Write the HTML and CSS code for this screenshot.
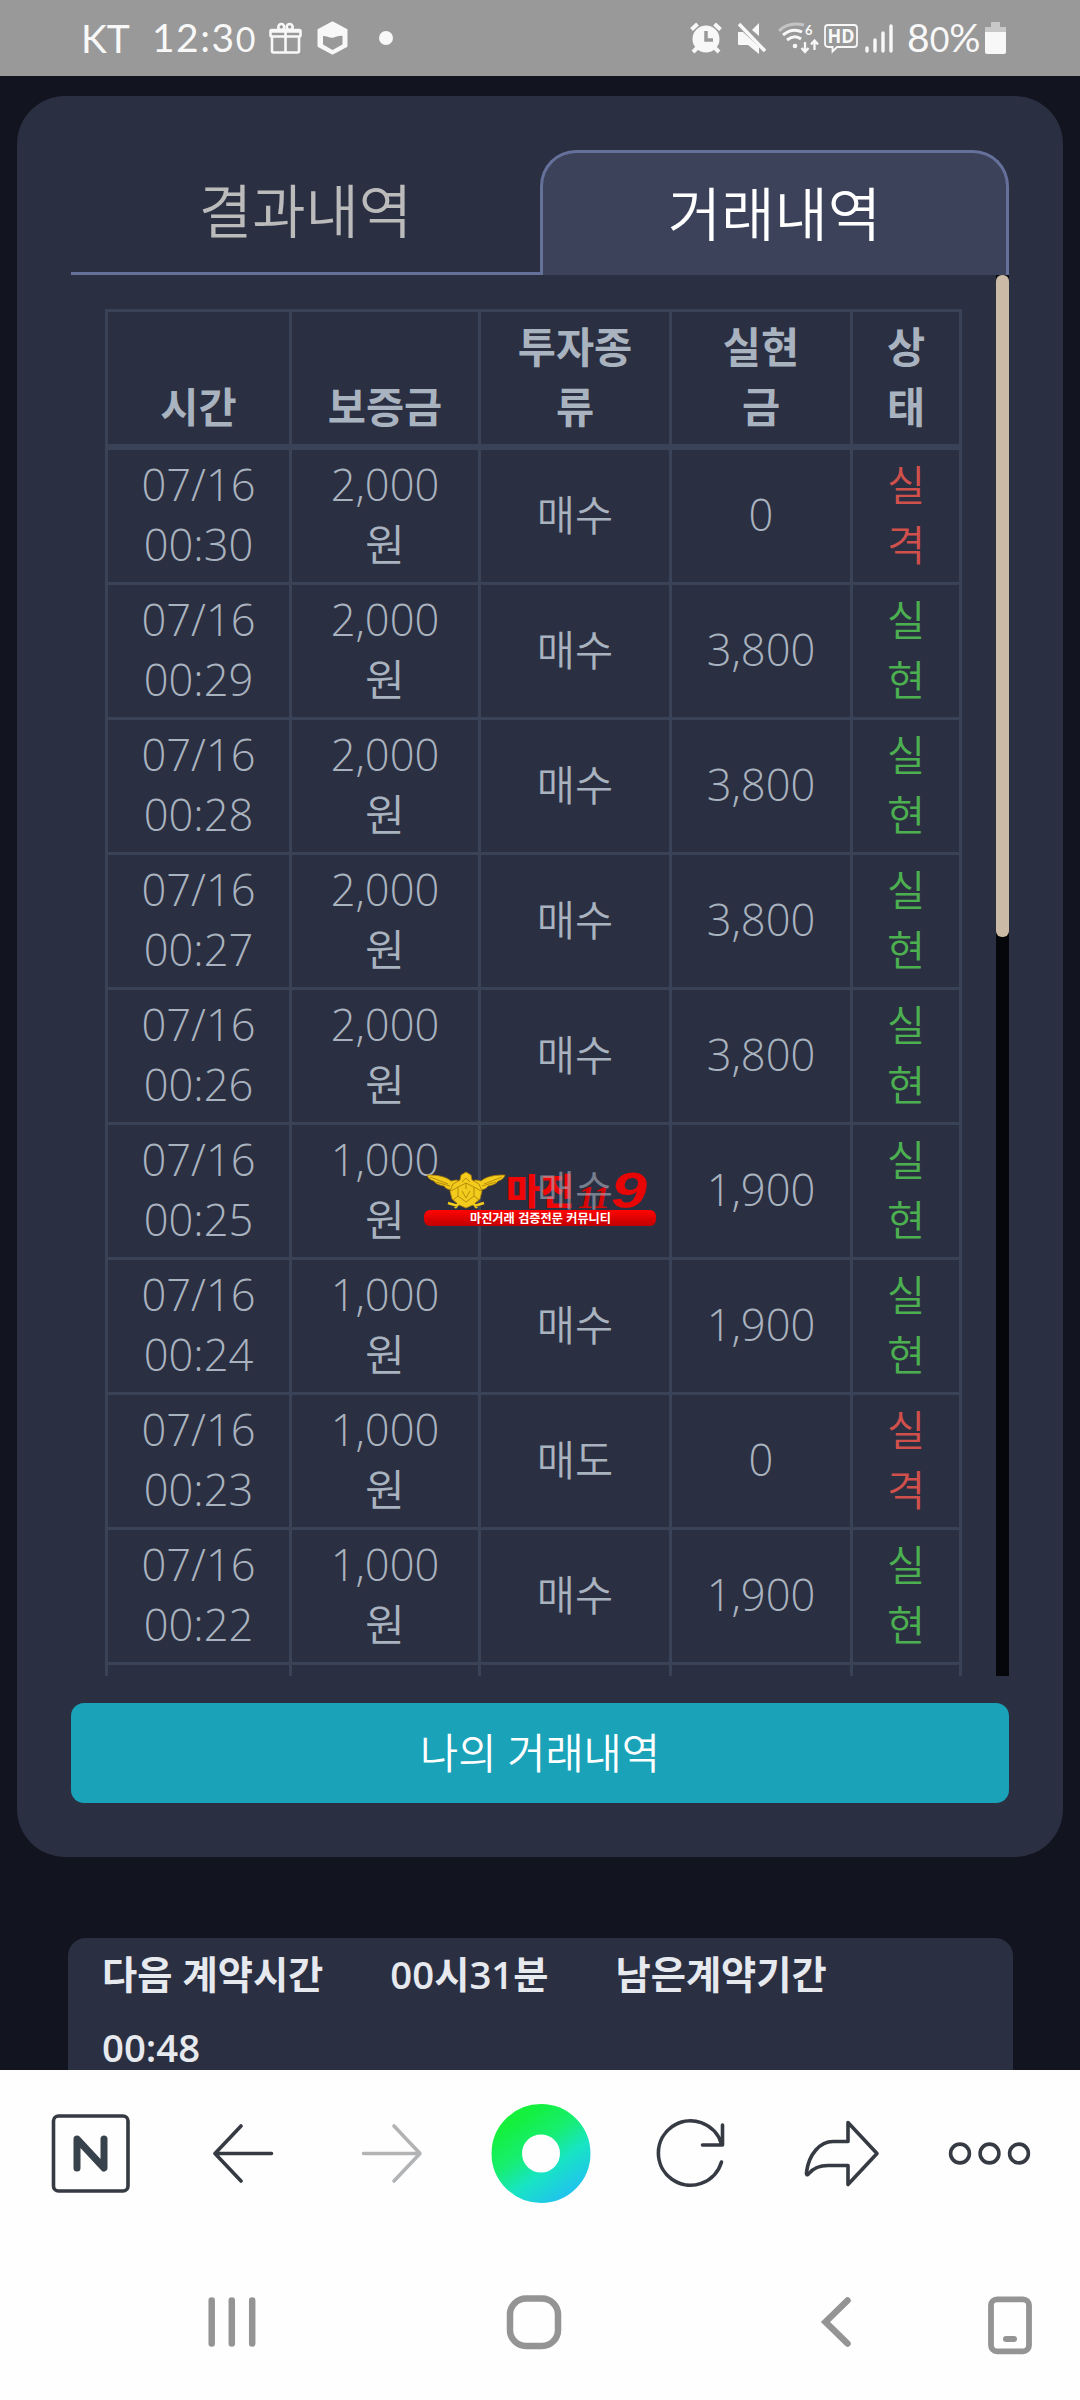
FILE: index.html
```html
<!DOCTYPE html>
<html lang="ko">
<head>
    <meta charset="UTF-8">
    <meta name="viewport" content="width=device-width, initial-scale=1.0">
    <title>거래내역</title>
    <link rel="stylesheet" href="styles.css">
</head>
<body>
    <div class="status-bar">
        <span class="carrier">KT</span>
        <span class="clock">12:3<span class="small-zero">0</span></span>
        <svg class="gift" width="33" height="32" viewBox="0 0 33 32" fill="none" stroke="#f8f8f8" stroke-width="2.6">
            <rect x="1.5" y="8" width="30" height="6.500" rx="1"/>
            <path d="M3 14.500V29a1.500 1.500 0 0 0 1.500 1.500h24A1.500 1.500 0 0 0 30 29V14.500M16.500 8v22M2 9.500h29"/>
            <circle cx="12.300" cy="5" r="3"/>
            <circle cx="20.700" cy="5" r="3"/>
        </svg>
        <svg class="hex" width="31" height="34" viewBox="0 0 31 34">
            <path d="M15.500 1.500L29.500 9v16L15.500 32.500 1.500 25V9z" fill="#f8f8f8" stroke="#f8f8f8" stroke-width="2" stroke-linejoin="round"/>
            <path d="M6 15c4 0 7 2.500 11 1.500 3-1 6-2 8.500-1.500v8.500l-10 5.500L6 23.500z" fill="#999"/>
        </svg>
        <span class="dot"></span>

        <div class="status-right">
            <svg width="32" height="32" viewBox="0 0 32 32" fill="#f8f8f8" stroke="#f8f8f8">
                <circle cx="16" cy="17" r="13.500" stroke="none"/>
                <path d="M1.500 7.500l6-5.500M30.500 7.500l-6-5.500" stroke-width="4"/>
                <path d="M7 26l-4 4M25 26l4 4" stroke-width="4"/>
                <path d="M16 9v9h7" fill="none" stroke="#999" stroke-width="3.500"/>
            </svg>
            <svg class="mute" width="30" height="32" viewBox="0 0 30 32" fill="#f8f8f8">
                <path d="M1 10h5l16 15v7l-11-9H2a1 1 0 0 1-1-1z"/>
                <path d="M15 8l7-7v13z"/>
                <path d="M2 2l26 27" stroke="#f8f8f8" stroke-width="3.500"/>
            </svg>
            <svg class="wifi" width="42" height="32" viewBox="0 0 42 32" fill="none" stroke="#f8f8f8" stroke-width="3">
                <path d="M1 9C8 2 17 1 26 3" stroke="#c4c4c4"/>
                <path d="M5 13c6-5 13-6 19-3M9 18c5-4 10-4 14-1"/>
                <circle cx="17" cy="24" r="2.300" fill="#f8f8f8" stroke="none"/>
                <path d="M27 20v9M23.500 26l3.500 4 3.500-4M36.500 28V19M33 22.500l3.500-4 3.500 4" stroke-width="2.300"/>
                <text x="27" y="13" class="wifi-gen">6</text>
            </svg>
            <svg class="hd" width="34" height="32" viewBox="0 0 34 32" fill="none" stroke="#f8f8f8" stroke-width="1.800">
                <path d="M4 3h26a3 3 0 0 1 3 3v16a3 3 0 0 1-3 3H13l-4.500 4.500V25H4a3 3 0 0 1-3-3V6a3 3 0 0 1 3-3z"/>
                <text x="3.500" y="21" class="hd-text" textLength="27" lengthAdjust="spacingAndGlyphs">HD</text>
            </svg>
            <svg class="signal" width="28" height="32" viewBox="0 0 28 32" stroke="#f8f8f8" stroke-width="3.400" stroke-linecap="round">
                <path d="M2 26v3M10 18v11M18 11v18M26 4v25"/>
            </svg>
            <span class="battery-text">8<span class="small-zero">0</span>%</span>
            <svg class="battery" width="21" height="33" viewBox="0 0 21 33">
                <path d="M6 0h9v5h6v6H0V5h6z" fill="#c8c8c8"/>
                <path d="M0 10h21v20a2 2 0 0 1-2 2H2a2 2 0 0 1-2-2z" fill="#f8f8f8"/>
            </svg>
        </div>
    </div>

    <main class="page">
        <section class="card">
            <div class="tabs">
                <div class="tab">결과내역</div>
                <div class="tab active">거래내역</div>
            </div>
            <div class="history">
                <table class="trades">
                    <colgroup>
                        <col class="c-time"><col class="c-deposit"><col class="c-type"><col class="c-profit"><col class="c-state">
                    </colgroup>
                    <thead>
                        <tr><th>시간</th><th>보증금</th><th>투자종<br>류</th><th>실현<br>금</th><th>상<br>태</th></tr>
                    </thead>
                    <tbody>
                        <tr><td class="num">07/16<br>00:30</td><td class="num">2,000<br>원</td><td>매수</td><td class="num">0</td><td class="lose">실<br>격</td></tr>
                        <tr><td class="num">07/16<br>00:29</td><td class="num">2,000<br>원</td><td>매수</td><td class="num">3,800</td><td class="win">실<br>현</td></tr>
                        <tr><td class="num">07/16<br>00:28</td><td class="num">2,000<br>원</td><td>매수</td><td class="num">3,800</td><td class="win">실<br>현</td></tr>
                        <tr><td class="num">07/16<br>00:27</td><td class="num">2,000<br>원</td><td>매수</td><td class="num">3,800</td><td class="win">실<br>현</td></tr>
                        <tr><td class="num">07/16<br>00:26</td><td class="num">2,000<br>원</td><td>매수</td><td class="num">3,800</td><td class="win">실<br>현</td></tr>
                        <tr><td class="num">07/16<br>00:25</td><td class="num">1,000<br>원</td><td><span class="over-logo">매수</span></td><td class="num">1,900</td><td class="win">실<br>현</td></tr>
                        <tr><td class="num">07/16<br>00:24</td><td class="num">1,000<br>원</td><td>매수</td><td class="num">1,900</td><td class="win">실<br>현</td></tr>
                        <tr><td class="num">07/16<br>00:23</td><td class="num">1,000<br>원</td><td>매도</td><td class="num">0</td><td class="lose">실<br>격</td></tr>
                        <tr><td class="num">07/16<br>00:22</td><td class="num">1,000<br>원</td><td>매수</td><td class="num">1,900</td><td class="win">실<br>현</td></tr>
                        <tr><td></td><td></td><td></td><td></td><td></td></tr>
                    </tbody>
                </table>
                <div class="scrollbar"><div class="thumb"></div></div>

                <svg class="logo" width="232" height="56" viewBox="0 0 232 56">
                    <defs>
                        <linearGradient id="bar" x1="0" y1="0" x2="0" y2="1">
                            <stop offset="0" stop-color="#ff0505"/>
                            <stop offset="1" stop-color="#c00000"/>
                        </linearGradient>
                    </defs>
                    <!-- eagle -->
                    <g fill="#f2cb1c" stroke="#a87c08" stroke-width="0.800">
                        <path d="M3 5c10 0 18 1 24 6l5-1c3 0 4 3 2 6l-3 4c-6 0-9-1-11-4-6-1-9-3-10-5-4-1-6-3-7-6z"/>
                        <path d="M81 5c-10 0-18 1-24 6l-5-1c-3 0-4 3-2 6l3 4c6 0 9-1 11-4 6-1 9-3 10-5 4-1 6-3 7-6z"/>
                        <path d="M42 2l5 3 1 5 7 4 3 7-2 8-7 6-7 3-7-3-7-6-2-8 3-7 7-4 1-5z"/>
                        <path d="M6 7l18 7M12 12l14 4M78 7l-18 7M72 12l-14 4M38 12l4-4 4 4M34 17l8-4 8 4v9l-8 6-8-6zM27 21l7-4M57 21l-7-4M34 26l-5 4M50 26l5 4M42 13v6M38 21l4 7 4-7" fill="none"/>
                    </g>
                    <path d="M24 33l10 3M60 33l-10 3M31 38l4-5M53 38l-4-5" stroke="#f2cb1c" stroke-width="2.500"/>
                    <text x="82" y="35" class="logo-name" textLength="68" lengthAdjust="spacingAndGlyphs">마진</text>
                    <text x="154" y="38" class="logo-num" textLength="32" lengthAdjust="spacingAndGlyphs">11</text>
                    <text x="187" y="38" class="logo-nine" textLength="36" lengthAdjust="spacingAndGlyphs">9</text>
                    <rect x="0" y="40" width="232" height="16" rx="6" fill="url(#bar)"/>
                    <text x="46" y="52.500" class="logo-sub" textLength="141" lengthAdjust="spacingAndGlyphs">마진거래 검증전문 커뮤니티</text>
                </svg>
            </div>
            <button class="my-trades" type="button">나의 거래내역</button>
        </section>

        <section class="contract">
            <span>다음 계약시간</span>
            <span class="next-time">00시31분</span>
            <span>남은계약기간</span>
            <span class="remain">00:48</span>
        </section>
    </main>

    <nav class="browser-bar">
        <svg width="1080" height="165" viewBox="0 0 1080 165" fill="none" stroke="#363a42" stroke-width="3.600" stroke-linecap="round" stroke-linejoin="round">
            <defs>
                <linearGradient id="green" gradientUnits="userSpaceOnUse" x1="515" y1="50" x2="567" y2="125">
                    <stop offset="0" stop-color="#14f03c"/>
                    <stop offset="0.350" stop-color="#17ee70"/>
                    <stop offset="0.650" stop-color="#18e4c4"/>
                    <stop offset="1" stop-color="#20c4ec"/>
                </linearGradient>
            </defs>
            <rect x="53.500" y="46" width="74.500" height="75" rx="5"/>
            <path d="M77 98V69l27 29V69" stroke="#38424c" stroke-width="7"/>
            <path d="M241 56l-26 27.500 26 27.500M216 83.500h55.500"/>
            <path d="M394 56l26 27.500-26 27.500M419 83.500h-55.500" stroke="#b2b3b5"/>
            <circle cx="541" cy="83.500" r="34.200" stroke="url(#green)" stroke-width="30.500"/>
            <path d="M721.500 92A32.200 32.200 0 1 1 721.500 74M722.500 55v20h-20"/>
            <path d="M848 52.500L877 83.500 848 114.500V95.500H828c-10 0-15 3-19 8-2 2.500-3 1-2.500-1.500C809 84 820 71.500 833 71.500h15z"/>
            <circle cx="960" cy="83.500" r="9.400"/>
            <circle cx="989.500" cy="83.500" r="9.400"/>
            <circle cx="1019" cy="83.500" r="9.400"/>
        </svg>
    </nav>
    <nav class="system-bar">
        <svg width="1080" height="165" viewBox="0 0 1080 165" fill="none" stroke="#949494" stroke-width="6.500" stroke-linecap="round">
            <path d="M211.700 65.500v43M231.800 65.500v43M252.200 65.500v43"/>
            <rect x="510" y="63.500" width="48" height="47.500" rx="16"/>
            <path d="M847.500 65.500L825.500 87l22 21.500"/>
            <rect x="991" y="64.300" width="38" height="52" rx="6" stroke-width="5.800"/>
            <path d="M1006 104h8" stroke-width="6"/>
        </svg>
    </nav>
</body>
</html>
```
FILE: styles.css
```css
* {
    box-sizing: border-box;
}

body {
    margin: 0;
    width: 1080px;
    height: 2400px;
    overflow: hidden;
    background-color: #12141f;
    font-family: "Open Sans", "Noto Sans CJK KR", sans-serif;
    display: flex;
    flex-direction: column;
}

svg {
    display: block;
    flex: none;
}

/* Status bar */
.status-bar {
    height: 76px;
    flex: none;
    display: flex;
    align-items: center;
    background-color: #999;
    color: #f8f8f8;
    padding: 0 74px 0 81px;
    font-family: Lato, sans-serif;
    font-size: 39px;
    line-height: 80px;
}

.carrier {
    width: 71px;
}

.clock {
    width: 117px;
    letter-spacing: 1.5px;
    white-space: nowrap;
}

.small-zero {
    font-size: 34px;
}

.hex {
    margin-left: 15px;
}

.dot {
    width: 14px;
    height: 14px;
    margin-left: 31px;
    border-radius: 50%;
    background-color: #f8f8f8;
}

.status-right {
    display: flex;
    align-items: center;
    margin-left: auto;
}

.mute {
    margin-left: 15px;
}

.wifi {
    margin-left: 11px;
}

.wifi-gen {
    font: bold 13px Lato, sans-serif;
    fill: #f8f8f8;
    stroke: none;
}

.hd {
    margin-left: 4px;
}

.hd-text {
    font: bold 19px "Open Sans", sans-serif;
    fill: #f8f8f8;
    stroke: none;
}

.signal {
    margin-left: 7px;
}

.battery-text {
    width: 78px;
    margin-left: 14px;
    white-space: nowrap;
}

/* Page */
.page {
    height: 1994px;
    flex: none;
    overflow: hidden;
    padding-top: 20px;
}

.card {
    width: 1046px;
    height: 1761px;
    margin: 0 17px;
    padding: 54px;
    border-radius: 48px;
    background-color: #2b2f42;
}

.tabs {
    display: flex;
    height: 125px;
}

.tab {
    width: 469px;
    border-bottom: 3px solid #66719b;
    color: #bbb;
    font-size: 58px;
    font-weight: 350;
    line-height: 122px;
    text-align: center;
}

.tab.active {
    border: 3px solid #66719b;
    border-bottom: none;
    border-radius: 36px 36px 0 0;
    background-color: #3b425a;
    color: #fff;
}

.history {
    position: relative;
    display: flex;
    align-items: flex-start;
    justify-content: space-between;
    height: 1401px;
    padding-left: 34px;
    overflow: hidden;
}

.trades {
    width: 857px;
    margin-top: 34px;
    table-layout: fixed;
    border-collapse: separate;
    border-spacing: 0;
    border-left: 3px solid #3a4258;
    border-top: 3px solid #3a4258;
    color: #a9b3bf;
    font-size: 41.5px;
    line-height: 60px;
    text-align: center;
}

.c-time {
    width: 184px;
}

.c-deposit {
    width: 189px;
}

.c-type {
    width: 191px;
}

.c-profit {
    width: 181px;
}

.c-state {
    width: 109px;
}

.trades th,
.trades td {
    height: 135px;
    padding: 5px 0 7px;
    border-right: 3px solid #3a4258;
    border-bottom: 3px solid #3a4258;
    font-weight: 350;
    vertical-align: middle;
}

.trades th {
    height: 138px;
    border-bottom-width: 6px;
    font-weight: 700;
    vertical-align: bottom;
}

.trades .num {
    font-size: 43.5px;
}

.trades .win {
    color: #4caf50;
}

.trades .lose {
    color: #d0504c;
}

.scrollbar {
    width: 13px;
    height: 1401px;
    background-color: #06070a;
}

.thumb {
    height: 662px;
    border-radius: 6px;
    background-color: #cbbaa5;
}

/* Logo stamped over the table */
.logo {
    position: absolute;
    left: 353px;
    top: 895px;
    z-index: 1;
}

.over-logo {
    position: relative;
    z-index: 2;
    opacity: 0.6;
}

.logo-name {
    font: 900 36px "Noto Sans CJK KR", sans-serif;
    fill: #ee0505;
}

.logo-num {
    font: italic bold 32px "Liberation Serif", serif;
    fill: #d80505;
}

.logo-nine {
    font: italic bold 50px "Liberation Sans", sans-serif;
    fill: #e80505;
}

.logo-sub {
    font: bold 12.5px "Noto Sans CJK KR", sans-serif;
    fill: #fff;
}

.my-trades {
    display: block;
    width: 938px;
    height: 100px;
    margin-top: 27px;
    padding: 0 0 4px;
    border: none;
    border-radius: 13px;
    background-color: #19a2b8;
    color: #fff;
    font-family: inherit;
    font-size: 41.5px;
    font-weight: 350;
}

.contract {
    display: flex;
    flex-wrap: wrap;
    align-content: flex-start;
    width: 945px;
    height: 200px;
    margin: 81px 0 0 68px;
    padding: 0 34px;
    border-radius: 18px;
    background-color: #2b2f42;
    color: #e6e9ee;
    font-size: 38.3px;
    font-weight: 600;
    line-height: 73px;
}

.next-time {
    margin: 0 67px;
}

.remain {
    width: 100%;
}

/* Bottom bars */
.browser-bar,
.system-bar {
    height: 165px;
    flex: none;
    background-color: #fefefe;
}
```
